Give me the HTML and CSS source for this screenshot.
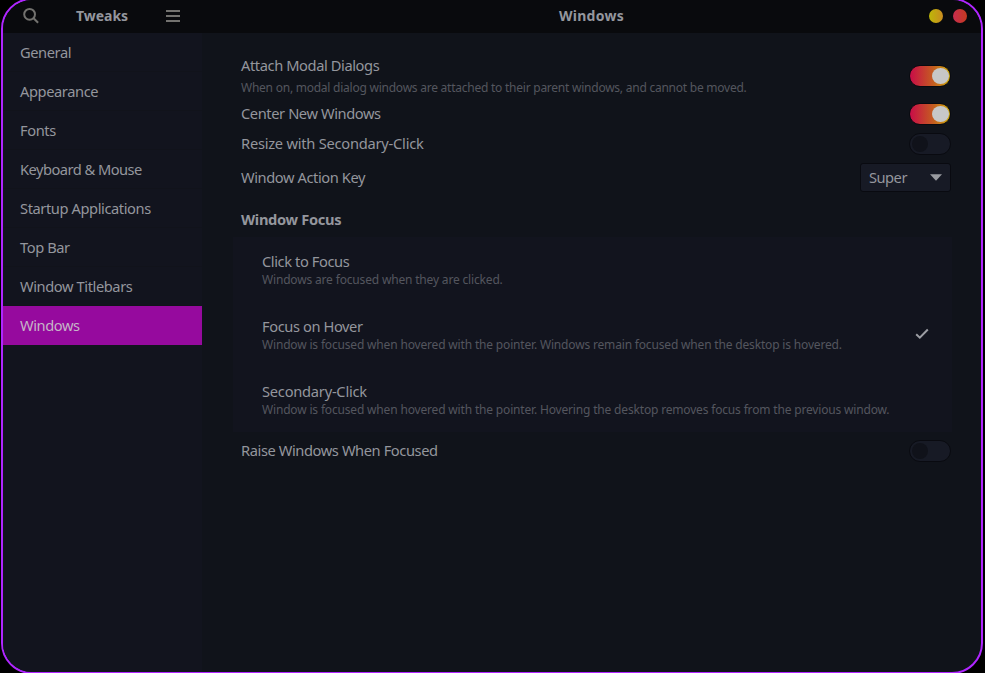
FILE: index.html
```html
<!DOCTYPE html>
<html lang="en">
<head>
<meta charset="utf-8">
<title>Tweaks</title>
<link rel="stylesheet" href="styles.css">
</head>
<body>
<div class="window">
  <header class="titlebar">
    <div class="side-head">
      <svg class="search" width="18" height="18" viewBox="0 0 18 18"><circle cx="7.6" cy="7.3" r="5.4"/><path d="M11.6 11.3l4.5 4.5"/></svg>
      <span class="app-title">Tweaks</span>
      <svg class="menu" width="14" height="12" viewBox="0 0 14 12"><path d="M0 1h14M0 6h14M0 11h14"/></svg>
    </div>
    <div class="main-head">Windows</div>
    <div class="controls"><i class="dot minimize"></i><i class="dot close"></i></div>
  </header>
  <div class="body">
    <nav class="sidebar">
      <a class="item">General</a>
      <a class="item">Appearance</a>
      <a class="item">Fonts</a>
      <a class="item tight">Keyboard &amp; Mouse</a>
      <a class="item">Startup Applications</a>
      <a class="item">Top Bar</a>
      <a class="item">Window Titlebars</a>
      <a class="item selected">Windows</a>
    </nav>
    <main class="content">
      <div class="row attach">
        <div class="label"><div class="name">Attach Modal Dialogs</div><div class="desc">When on, modal dialog windows are attached to their parent windows, and cannot be moved.</div></div>
        <span class="switch on"></span>
      </div>
      <div class="row center"><div class="name">Center New Windows</div><span class="switch on"></span></div>
      <div class="row resize"><div class="name loose">Resize with Secondary-Click</div><span class="switch"></span></div>
      <div class="row action"><div class="name">Window Action Key</div>
        <div class="combo"><span>Super</span><svg width="12" height="7" viewBox="0 0 12 7"><path d="M0 .3h12L6 6.7z"/></svg></div>
      </div>
      <h2 class="heading">Window Focus</h2>
      <div class="list">
        <div class="option"><div><div class="name">Click to Focus</div><div class="desc">Windows are focused when they are clicked.</div></div></div>
        <div class="option"><div><div class="name">Focus on Hover</div><div class="desc">Window is focused when hovered with the pointer. Windows remain focused when the desktop is hovered.</div></div>
          <svg class="check" width="14" height="12" viewBox="0 0 14 12"><path d="M1.2 6.3l3.6 3.4L12.8 1.5"/></svg></div>
        <div class="option"><div><div class="name loose">Secondary-Click</div><div class="desc">Window is focused when hovered with the pointer. Hovering the desktop removes focus from the previous window.</div></div></div>
      </div>
      <div class="row raise"><div class="name">Raise Windows When Focused</div><span class="switch"></span></div>
    </main>
  </div>
</div>
</body>
</html>
```
FILE: styles.css
```css
* { box-sizing: border-box; }
html, body { height: 100%; overflow: hidden; }
body {
  margin: 0;
  background: #000;
  color: #94969d;
  font: 14.67px/20px "Noto Sans", sans-serif;
  letter-spacing: -0.41px;
  white-space: nowrap;
}
.window {
  width: 982px;
  height: 676px;
  margin: -2px 0 0 1px;
  border: 2px solid #b026ff;
  border-radius: 31px;
  overflow: hidden;
  background: #10131a;
  display: flex;
  flex-direction: column;
}
.titlebar {
  display: flex;
  align-items: center;
  height: 33px;
  padding-bottom: 2px;
  flex: none;
  background: #090a0d;
  font-weight: 700;
  font-size: 14px;
  letter-spacing: 0;
}
.side-head { width: 199px; display: flex; align-items: center; padding-left: 19px; }
.app-title { width: 108px; margin: 0 10px 0 8px; text-align: center; }
.side-head svg { fill: none; stroke: #73726f; stroke-width: 2; flex: none; }
.main-head { flex: 1; text-align: center; letter-spacing: 0.25px; }
.controls { display: flex; gap: 10px; margin-left: -52px; padding-right: 14px; }
.dot { width: 14px; height: 14px; border-radius: 50%; }
.minimize { background: linear-gradient(90deg, #bdb708, #c98c20); }
.close { background: linear-gradient(90deg, #c92d4f, #c43a20); }
.body { flex: 1; display: flex; }
.sidebar { width: 199px; flex: none; background: #12141e; }
.item {
  display: flex;
  align-items: center;
  height: 39px;
  padding-left: 17px;
  border-bottom: 1px solid #11131b;
}
.tight { letter-spacing: -0.53px; }
.loose { letter-spacing: -0.24px; }
.selected { background: #960a9e; border-color: #960a9e; color: #c5b5c7; }
.content { flex: 1; min-width: 0; padding: 22px 30px 0 31px; }
.row { display: flex; align-items: center; justify-content: space-between; padding-left: 8px; }
.row > .name { padding-bottom: 2px; }
.attach { height: 42px; }
.label { padding-bottom: 2px; }
.center { height: 34px; }
.resize { height: 26px; }
.action { height: 41px; }
.action > .name { padding-bottom: 1px; }
.desc { font-size: 12px; line-height: 16px; letter-spacing: -0.17px; color: #54565e; }
.attach .desc { margin-top: 5px; letter-spacing: -0.24px; }
.switch {
  width: 42px;
  height: 22px;
  border: 1px solid #090a10;
  border-radius: 11px;
  background: #171a25;
  padding: 2px;
}
.switch::before {
  content: "";
  display: block;
  width: 16px;
  height: 16px;
  border-radius: 50%;
  background: #10121a;
}
.on { background: linear-gradient(90deg, #c90c48, #c4601f 60%, #cfac0b); }
.on::before { width: 17px; margin-left: 20px; background: #c7c7c7; }
.combo {
  width: 91px;
  height: 29px;
  display: flex;
  align-items: center;
  justify-content: space-between;
  padding: 0 8px 1px 8px;
  border: 1px solid #090a10;
  border-radius: 3px;
  background: #171a25;
  letter-spacing: -0.5px;
}
.combo svg { fill: #999ba0; }
.heading { margin: 11px 0 8px 8px; font-size: 14.67px; line-height: 20px; letter-spacing: -0.33px; }
.list { width: 719px; height: 195px; background: #12141e; }
.option { height: 65px; display: flex; align-items: center; justify-content: space-between; padding: 0 23px 1px 29px; }
.option .desc { margin-top: 1px; line-height: 16px; }
.check { fill: none; stroke: #9c9ea4; stroke-width: 2; margin-bottom: 1px; }
.raise { height: 38px; }
```
